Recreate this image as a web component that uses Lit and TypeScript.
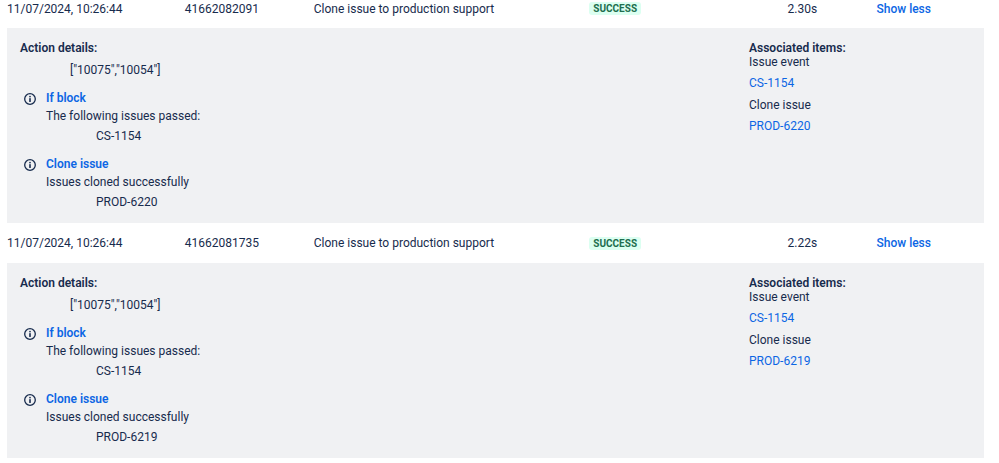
import { LitElement, html, css, svg } from "lit";
import { customElement, property } from "lit/decorators.js";

interface Step {
  title: string;
  message: string;
  result: string;
}

interface Entry {
  date: string;
  id: string;
  rule: string;
  status: string;
  duration: string;
  value: string;
  steps: Step[];
  items: { label: string; key: string }[];
}

const makeEntry = (id: string, duration: string, cloned: string): Entry => ({
  date: "11/07/2024, 10:26:44",
  id,
  rule: "Clone issue to production support",
  status: "Success",
  duration,
  value: '["10075","10054"]',
  steps: [
    { title: "If block", message: "The following issues passed:", result: "CS-1154" },
    { title: "Clone issue", message: "Issues cloned successfully", result: cloned },
  ],
  items: [
    { label: "Issue event", key: "CS-1154" },
    { label: "Clone issue", key: cloned },
  ],
});

const entries: Entry[] = [
  makeEntry("41662082091", "2.30s", "PROD-6220"),
  makeEntry("41662081735", "2.22s", "PROD-6219"),
];

const infoIcon = html`<svg class="icon" viewBox="0 0 12 12" aria-hidden="true">
  ${svg`<circle cx="6" cy="6" r="5.3" fill="none" stroke="currentColor" stroke-width="1.3"></circle>
  <circle cx="6" cy="3.6" r="0.85" fill="currentColor"></circle>
  <rect x="5.2" y="5.1" width="1.6" height="3.9" rx="0.6" fill="currentColor"></rect>`}
</svg>`;

@customElement("audit-details")
export class AuditDetails extends LitElement {
  @property({ attribute: false }) entry!: Entry;

  static styles = css`
    :host {
      display: grid;
      grid-template-columns: 729fr 222fr;
      padding: 13px 13px 14px;
      background: #f0f1f3;
    }
    h3,
    h4,
    p,
    dl,
    dd {
      margin: 0;
      font-size: inherit;
    }
    h3 {
      font-weight: 600;
      color: #172b4d;
    }
    a {
      color: #0c66e4;
      text-decoration: none;
    }
    .value {
      margin: 8px 0 0 50px;
    }
    .step {
      display: grid;
      grid-template-columns: 12px 1fr;
      column-gap: 10px;
      margin: 14px 0 0 4px;
    }
    .icon {
      width: 12px;
      height: 12px;
      margin-top: 2px;
    }
    h4 {
      font-weight: 600;
      margin-bottom: 4px;
    }
    .result {
      margin: 6px 0 0 50px;
    }
    dd {
      margin: 7px 0 8px;
    }
    dd:last-child {
      margin-bottom: 0;
    }
  `;

  render() {
    const { value, steps, items } = this.entry;
    return html`
      <section>
        <h3>Action details:</h3>
        <p class="value">${value}</p>
        ${steps.map(
          (s) => html`<div class="step">
            ${infoIcon}
            <div>
              <h4><a href="#">${s.title}</a></h4>
              <p>${s.message}</p>
              <p class="result">${s.result}</p>
            </div>
          </div>`
        )}
      </section>
      <section>
        <h3>Associated items:</h3>
        <dl>
          ${items.map((i) => html`<dt>${i.label}</dt><dd><a href="#">${i.key}</a></dd>`)}
        </dl>
      </section>
    `;
  }
}

@customElement("app-root")
export class AppRoot extends LitElement {
  static styles = css`
    :host {
      display: block;
      padding: 0 15px 0 7px;
      background: #ffffff;
      color: #172b4d;
      font: 12px/14px Roboto, "Liberation Sans", sans-serif;
    }
    table {
      width: 100%;
      table-layout: fixed;
      border-collapse: collapse;
    }
    .date {
      width: 18.2%;
    }
    .id {
      width: 13.2%;
    }
    .rule {
      width: 28.2%;
    }
    .status {
      width: 20.3%;
    }
    .duration {
      width: 9.1%;
    }
    td {
      padding: 0;
      white-space: nowrap;
      vertical-align: middle;
    }
    .summary td {
      height: 40px;
    }
    .summary:first-child td {
      height: 28px;
      padding-bottom: 11px;
      box-sizing: border-box;
    }
    .badge {
      display: block;
      width: fit-content;
      padding: 0 4px;
      border-radius: 3px;
      background: #dcfff1;
      color: #216e4e;
      font-size: 10px;
      line-height: 13px;
      font-weight: 700;
      text-transform: uppercase;
    }
    button {
      display: block;
      padding: 0;
      border: 0;
      background: none;
      color: #0c66e4;
      font: inherit;
      font-weight: 500;
      cursor: pointer;
    }
  `;

  render() {
    return html`<table>
      <tbody>
        ${entries.map(
          (e) => html`<tr class="summary">
              <td class="date">${e.date}</td>
              <td class="id">${e.id}</td>
              <td class="rule">${e.rule}</td>
              <td class="status"><span class="badge">${e.status}</span></td>
              <td class="duration">${e.duration}</td>
              <td><button type="button">Show less</button></td>
            </tr>
            <tr>
              <td colspan="6"><audit-details .entry=${e}></audit-details></td>
            </tr>`
        )}
      </tbody>
    </table>`;
  }
}
